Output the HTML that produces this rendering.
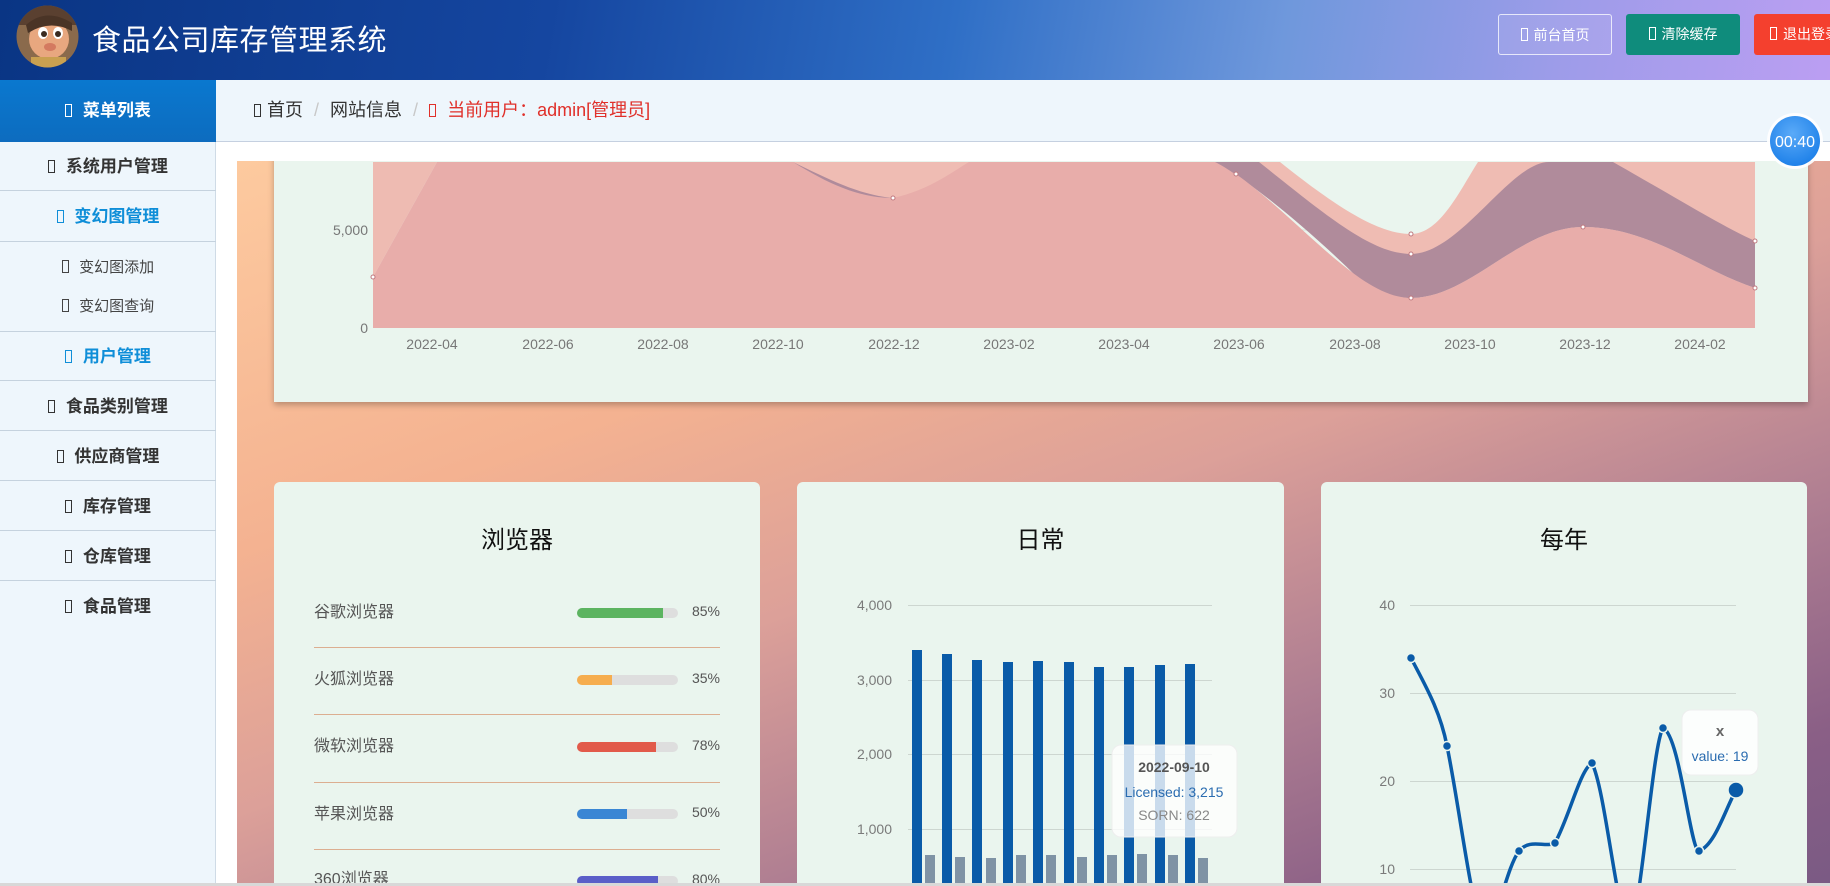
<!DOCTYPE html>
<html style="overflow:hidden;height:886px"><head><meta charset="utf-8">
<style>
*{margin:0;padding:0;box-sizing:border-box}
html,body{overflow:hidden}
body{width:1830px;height:886px;position:relative;font-family:"Liberation Sans","Noto Sans CJK SC",sans-serif;background:#fff}
#wrap{position:absolute;left:0;top:0;width:1830px;height:886px;overflow:hidden}
.abs{position:absolute}
.hdr{left:0;top:0;width:1830px;height:80px;background:linear-gradient(100deg,#0a3584 0%,#1546a0 30%,#2f6fc6 52%,#6f98dc 70%,#9d9ce9 85%,#bb9ef2 100%)}
.ic{display:inline-block;width:7px;height:13px;border:1.3px solid currentColor;vertical-align:-1px;margin-right:6px}
.btn{top:14px;height:41px;border-radius:3px;color:#fff;font-size:14px;line-height:41px;text-align:center;white-space:nowrap;overflow:hidden}
.side{left:0;top:80px;width:216px;height:806px;background:#eef6fc;border-right:1px solid #cfdbe6}
.item{position:absolute;left:0;width:216px;text-align:center;font-size:17px;font-weight:bold;color:#333;border-bottom:1px solid #c5d2de}
.sub{position:absolute;left:0;width:216px;text-align:center;font-size:15px;color:#444}
.card{background:#eaf5ee;border-radius:6px}
</style></head><body><div id="wrap">
<div class="abs hdr"></div>
<svg class="abs" style="left:16px;top:5px" width="63" height="63" viewBox="0 0 63 63">
<defs><clipPath id="cc"><circle cx="31.5" cy="31.5" r="31"/></clipPath></defs>
<g clip-path="url(#cc)">
<rect width="63" height="63" fill="#8a6a4c"/>
<rect x="0" y="0" width="63" height="20" fill="#5a4030"/>
<ellipse cx="33" cy="34" rx="20" ry="20" fill="#e8a77f"/>
<path d="M10 20 Q30 2 56 18 L56 26 Q34 14 12 28Z" fill="#4a3426"/>
<ellipse cx="27" cy="28" rx="5" ry="6" fill="#fff"/><ellipse cx="42" cy="28" rx="5" ry="6" fill="#fff"/>
<circle cx="28" cy="29" r="3" fill="#3a2a20"/><circle cx="42" cy="29" r="3" fill="#3a2a20"/>
<ellipse cx="34" cy="42" rx="6" ry="4" fill="#d47a60"/>
<rect x="15" y="52" width="35" height="12" fill="#c9a050"/>
</g></svg>
<div class="abs" style="left:92px;top:17px;font-size:29px;color:#fff;letter-spacing:0.5px">食品公司库存管理系统</div>
<div class="abs btn" style="left:1498px;width:114px;border:1px solid rgba(255,255,255,.75);background:rgba(255,255,255,.08)"><span class="ic"></span>前台首页</div>
<div class="abs btn" style="left:1626px;width:114px;background:#0f8c7c"><span class="ic"></span>清除缓存</div>
<div class="abs btn" style="left:1754px;width:76px;background:#f4402e;text-align:left;padding-left:16px;border-radius:3px 0 0 3px"><span class="ic"></span>退出登录</div>

<div class="abs side">
<div class="abs" style="left:0;top:0;width:216px;height:62px;background:linear-gradient(180deg,#0a78cf,#0d6cbf);color:#fff;font-weight:bold;font-size:17px;line-height:62px;text-align:center"><span class="ic"></span> 菜单列表</div>
<div class="item" style="top:62px;height:49px;line-height:50px"><span class="ic"></span> 系统用户管理</div>
<div class="item" style="top:112px;height:50px;line-height:50px;color:#0f8ed8"><span class="ic"></span> 变幻图管理</div>
<div class="sub" style="top:176px"><span class="ic"></span> 变幻图添加</div>
<div class="sub" style="top:215px"><span class="ic"></span> 变幻图查询</div>
<div class="item" style="top:251px;height:1px;border:none;border-top:1px solid #c5d2de"></div>
<div class="item" style="top:252px;height:49px;line-height:50px;color:#0f8ed8"><span class="ic"></span> 用户管理</div>
<div class="item" style="top:302px;height:49px;line-height:50px"><span class="ic"></span> 食品类别管理</div>
<div class="item" style="top:352px;height:49px;line-height:50px"><span class="ic"></span> 供应商管理</div>
<div class="item" style="top:402px;height:49px;line-height:50px"><span class="ic"></span> 库存管理</div>
<div class="item" style="top:452px;height:49px;line-height:50px"><span class="ic"></span> 仓库管理</div>
<div class="item" style="top:502px;height:50px;line-height:50px;border:none"><span class="ic"></span> 食品管理</div>
</div>

<div class="abs" style="left:216px;top:80px;width:1614px;height:62px;background:#eef6fc;border-bottom:1px solid #c5d0e0;font-size:18px;line-height:61px;color:#333;padding-left:38px">
<span class="ic"></span>首页 <span style="color:#c8c8c8;margin:0 6px">/</span> 网站信息 <span style="color:#c8c8c8;margin:0 6px">/</span> <span style="color:#e0302a"><span class="ic"></span> 当前用户：admin[管理员]</span></div>

<div class="abs" style="left:237px;top:161px;width:1593px;height:725px;background:linear-gradient(160deg,#fdca9f 0%,#f4b291 30%,#dca099 50%,#b07f92 70%,#8a5f86 88%,#7a5a84 100%)"></div>

<div class="abs card" style="left:274px;top:150px;width:1534px;height:252px;border-radius:0;box-shadow:0 3px 6px rgba(0,0,0,.25)"></div>
<svg class="abs" style="left:0;top:0" width="1830" height="886">
<defs><clipPath id="pc"><rect x="373" y="162" width="1382" height="166"/></clipPath></defs>
<line x1="373" y1="230" x2="1755" y2="230" stroke="#d6e2d9"/>
<g clip-path="url(#pc)">
<path d="M373 277 L437 162 L373 162Z" fill="#eebbb2"/>
<path d="M373 277 L437 162 L1236 162 L1236 174 C1300 220 1360 298 1411 298 C1470 298 1520 227 1583 227 C1650 227 1700 270 1755 288 L1755 330 L373 330Z" fill="#e8adaa"/>
<path d="M793 162 C830 185 860 198 893 198 C930 190 955 170 969 162Z" fill="#efbcb3"/>
<path d="M793 162 C830 185 860 198 893 198 C860 195 830 180 793 162Z" fill="#b08b9b"/>
<path d="M1215 162 C1236 172 1300 220 1360 280 C1380 292 1395 298 1411 298 C1470 298 1520 227 1583 227 C1650 227 1700 270 1755 288 L1755 162Z" fill="#b08b9b"/>
<path d="M1236 174 C1300 220 1360 298 1411 298 C1470 298 1520 227 1583 227 C1650 227 1700 270 1755 288 L1755 330 L1236 330Z" fill="#e8adaa"/>
<path d="M1259 162 C1320 210 1370 254 1411 254 C1460 254 1510 162 1549 162Z" fill="#efbcb3"/>
<path d="M1613 162 C1680 200 1720 225 1755 241 L1755 162Z" fill="#efbcb3"/>
<path d="M1280 162 C1340 210 1380 234 1411 234 C1440 234 1460 190 1478 162Z" fill="#eaf5ee"/>
</g>
<g fill="#fff" stroke="#c07a80" stroke-width="1"><circle cx="373" cy="277" r="2"/><circle cx="893" cy="198" r="2"/><circle cx="1236" cy="174" r="2"/><circle cx="1411" cy="234" r="2"/><circle cx="1411" cy="254" r="2"/><circle cx="1411" cy="298" r="2"/><circle cx="1583" cy="227" r="2"/><circle cx="1755" cy="241" r="2"/><circle cx="1755" cy="288" r="2"/></g>
<g font-family="Liberation Sans,sans-serif" font-size="14" fill="#777">
<text x="368" y="235" text-anchor="end">5,000</text><text x="368" y="333" text-anchor="end">0</text>
<g text-anchor="middle"><text x="432" y="349">2022-04</text><text x="548" y="349">2022-06</text><text x="663" y="349">2022-08</text><text x="778" y="349">2022-10</text><text x="894" y="349">2022-12</text><text x="1009" y="349">2023-02</text><text x="1124" y="349">2023-04</text><text x="1239" y="349">2023-06</text><text x="1355" y="349">2023-08</text><text x="1470" y="349">2023-10</text><text x="1585" y="349">2023-12</text><text x="1700" y="349">2024-02</text></g>
</g>
</svg>
<div class="abs" style="left:216px;top:142px;width:1614px;height:19px;background:#fff"></div>

<div class="abs card" style="left:274px;top:482px;width:486px;height:404px;border-radius:6px 6px 0 0"></div>
<div class="abs card" style="left:797px;top:482px;width:487px;height:404px;border-radius:6px 6px 0 0"></div>
<div class="abs card" style="left:1321px;top:482px;width:486px;height:404px;border-radius:6px 6px 0 0"></div>
<div class="abs" style="left:274px;top:520px;width:486px;text-align:center;font-size:24px;color:#111">浏览器</div>
<div class="abs" style="left:797px;top:520px;width:487px;text-align:center;font-size:24px;color:#111">日常</div>
<div class="abs" style="left:1321px;top:520px;width:486px;text-align:center;font-size:24px;color:#111">每年</div>

<svg class="abs" style="left:0;top:0" width="1830" height="886">
<g font-family="Liberation Sans,Noto Sans CJK SC,sans-serif">
<g font-size="16" fill="#555">
<text x="314" y="617">谷歌浏览器</text><text x="314" y="684">火狐浏览器</text><text x="314" y="751">微软浏览器</text><text x="314" y="819">苹果浏览器</text><text x="314" y="884">360浏览器</text></g>
<g font-size="14" fill="#555" text-anchor="end"><text x="720" y="616">85%</text><text x="720" y="683">35%</text><text x="720" y="750">78%</text><text x="720" y="817">50%</text><text x="720" y="884">80%</text></g>
<g stroke="#dcae90"><line x1="314" y1="647.5" x2="720" y2="647.5"/><line x1="314" y1="714.5" x2="720" y2="714.5"/><line x1="314" y1="782.5" x2="720" y2="782.5"/><line x1="314" y1="849.5" x2="720" y2="849.5"/></g>
<g fill="#dedede"><rect x="577" y="608" width="101" height="10" rx="5"/><rect x="577" y="675" width="101" height="10" rx="5"/><rect x="577" y="742" width="101" height="10" rx="5"/><rect x="577" y="809" width="101" height="10" rx="5"/><rect x="577" y="876" width="101" height="10" rx="5"/></g>
<path d="M582 608H663V618H582A5 5 0 0 1 582 608Z" fill="#5cb460"/><path d="M582 675H612V685H582A5 5 0 0 1 582 675Z" fill="#f6ad4e"/><path d="M582 742H656V752H582A5 5 0 0 1 582 742Z" fill="#e25a4a"/><path d="M582 809H627V819H582A5 5 0 0 1 582 809Z" fill="#3a86d4"/><path d="M582 876H658V886H582A5 5 0 0 1 582 876Z" fill="#5a5ec8"/>

<g stroke="#cdd6d0"><line x1="908" y1="605.5" x2="1212" y2="605.5"/><line x1="908" y1="680.5" x2="1212" y2="680.5"/><line x1="908" y1="754.5" x2="1212" y2="754.5"/><line x1="908" y1="829.5" x2="1212" y2="829.5"/></g>
<g font-size="14" fill="#7a7a7a" text-anchor="end"><text x="892" y="610">4,000</text><text x="892" y="685">3,000</text><text x="892" y="759">2,000</text><text x="892" y="834">1,000</text></g>
<g fill="#0a5ba8">
<rect x="912" y="650" width="10" height="236"/><rect x="942" y="654" width="10" height="232"/><rect x="972" y="660" width="10" height="226"/><rect x="1003" y="662" width="10" height="224"/><rect x="1033" y="661" width="10" height="225"/><rect x="1064" y="662" width="10" height="224"/><rect x="1094" y="667" width="10" height="219"/><rect x="1124" y="667" width="10" height="219"/><rect x="1155" y="665" width="10" height="221"/><rect x="1185" y="664" width="10" height="222"/></g>
<g fill="#7f93a5">
<rect x="925" y="855" width="10" height="31"/><rect x="955" y="857" width="10" height="29"/><rect x="986" y="858" width="10" height="28"/><rect x="1016" y="855" width="10" height="31"/><rect x="1046" y="855" width="10" height="31"/><rect x="1077" y="857" width="10" height="29"/><rect x="1107" y="855" width="10" height="31"/><rect x="1137" y="854" width="10" height="32"/><rect x="1168" y="855" width="10" height="31"/><rect x="1198" y="858" width="10" height="28"/></g>
<rect x="1112" y="745" width="125" height="92" rx="9" fill="rgba(255,255,255,.78)" stroke="#eee"/>
<text x="1174" y="772" text-anchor="middle" font-size="14" font-weight="bold" fill="#555">2022-09-10</text>
<text x="1174" y="797" text-anchor="middle" font-size="14" fill="#2a6cb0">Licensed: 3,215</text>
<text x="1174" y="820" text-anchor="middle" font-size="14" fill="#888">SORN: 622</text>

<g stroke="#cdd6d0"><line x1="1410" y1="605.5" x2="1736" y2="605.5"/><line x1="1410" y1="693.5" x2="1736" y2="693.5"/><line x1="1410" y1="781.5" x2="1736" y2="781.5"/><line x1="1410" y1="869.5" x2="1736" y2="869.5"/></g>
<g font-size="14" fill="#7a7a7a" text-anchor="end"><text x="1395" y="610">40</text><text x="1395" y="698">30</text><text x="1395" y="786">20</text><text x="1395" y="874">10</text></g>
<defs><clipPath id="lc"><rect x="1321" y="482" width="486" height="404"/></clipPath></defs>
<path clip-path="url(#lc)" d="M1411 658 C1425 685 1440 710 1447 746 C1460 810 1470 900 1483 931 C1495 935 1505 870 1519 851 C1530 838 1545 848 1555 843 C1570 815 1580 770 1592 763 C1605 790 1615 900 1628 931 C1640 930 1652 745 1663 728 C1680 735 1690 850 1699 851 C1715 845 1725 810 1736 790" fill="none" stroke="#0a5ba8" stroke-width="3.5" stroke-linejoin="round"/>
<g fill="#0a5ba8" stroke="#eaf5ee" stroke-width="1.5"><circle cx="1411" cy="658" r="4.5"/><circle cx="1447" cy="746" r="4.5"/><circle cx="1519" cy="851" r="4.5"/><circle cx="1555" cy="843" r="4.5"/><circle cx="1592" cy="763" r="4.5"/><circle cx="1663" cy="728" r="4.5"/><circle cx="1699" cy="851" r="4.5"/><circle cx="1736" cy="790" r="8"/></g>
<rect x="1682" y="710" width="76" height="65" rx="9" fill="rgba(255,255,255,.85)" stroke="#eee"/>
<text x="1720" y="736" text-anchor="middle" font-size="15" font-weight="bold" fill="#666">x</text>
<text x="1720" y="761" text-anchor="middle" font-size="14" fill="#2a6cb0">value: 19</text>
</g>
<circle cx="1795" cy="141" r="28" fill="#fff" opacity=".9"/>
<defs><radialGradient id="tg" cx="45%" cy="35%" r="70%"><stop offset="0" stop-color="#5aaaf8"/><stop offset="1" stop-color="#1a7ee8"/></radialGradient></defs>
<circle cx="1795" cy="141" r="25" fill="url(#tg)"/>
<text x="1795" y="147" text-anchor="middle" font-family="Liberation Sans,sans-serif" font-size="16" fill="#fff">00:40</text>
<rect x="0" y="883" width="1830" height="3" fill="#d8d8d8"/>
</svg>
</div></body></html>
